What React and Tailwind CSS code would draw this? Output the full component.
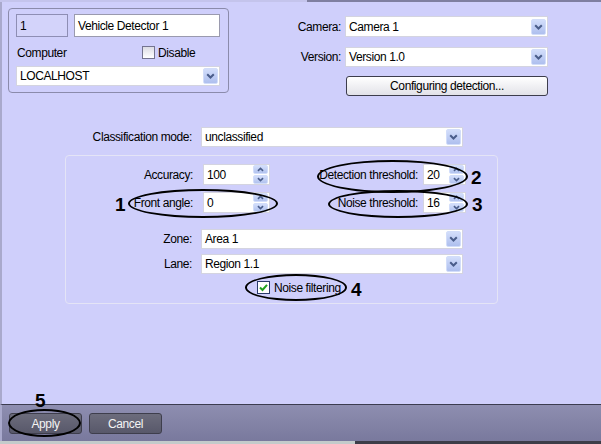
import React from "react";

const Chevron = ({ dir = "down", w = 9, h = 6 }) => (
  <svg width={w} height={h} viewBox="0 0 9 6">
    {dir === "down" ? (
      <path d="M1.2 1.2 L4.5 4.5 L7.8 1.2" fill="none" stroke="#4a5d8a" strokeWidth="2" />
    ) : (
      <path d="M1.2 4.8 L4.5 1.5 L7.8 4.8" fill="none" stroke="#4a5d8a" strokeWidth="2" />
    )}
  </svg>
);

const DropBtn = () => (
  <div className="flex h-[16px] w-[15px] items-center justify-center rounded-[2px] border border-[#d2ddfa] bg-gradient-to-b from-[#d3defb] to-[#aebfee]">
    <Chevron />
  </div>
);

const SpinBtns = () => (
  <div className="flex flex-col gap-[1px]">
    <div className="flex h-[9px] w-[15px] items-center justify-center rounded-[2px] border border-[#d2ddfa] bg-gradient-to-b from-[#d3defb] to-[#b2c3ef]">
      <Chevron dir="up" w={7} h={5} />
    </div>
    <div className="flex h-[9px] w-[15px] items-center justify-center rounded-[2px] border border-[#d2ddfa] bg-gradient-to-b from-[#d3defb] to-[#b2c3ef]">
      <Chevron dir="down" w={7} h={5} />
    </div>
  </div>
);

export default function App() {
  return (
    <div className="relative flex h-[444px] w-[601px] flex-col overflow-hidden bg-[#cfcffb] font-['Liberation_Sans',Arial,sans-serif] text-[12px] leading-none tracking-[-0.4px] text-black">
      {/* top edge */}
      <div className="flex h-[2px]">
        <div className="w-[307px] bg-[#c4c4ec]" />
        <div className="flex-1 bg-[#7f7fa0]" />
      </div>

      {/* main area */}
      <div className="flex h-[402px] flex-col border-l-2 border-[#a9a9cc]">
        {/* top row */}
        <div className="flex pt-[6px]">
          {/* left group box */}
          <div className="ml-[6px] flex h-[85px] w-[221px] flex-col rounded-[4px] border border-[#8b8bab] px-[7px] pt-[5px]">
            <div className="flex gap-[6px]">
              <div className="flex h-[23px] w-[52px] items-center border border-[#8e8eb4] bg-[#d3d3fa] pl-[3px] text-[12px]">
                1
              </div>
              <div className="flex h-[23px] w-[146px] items-center border border-[#9a9aae] bg-white pl-[3px]">
                Vehicle Detector 1
              </div>
            </div>
            <div className="mt-[9px] flex h-[13px] items-center">
              <div className="w-[126px] pl-[1px]">Computer</div>
              <div className="h-[13px] w-[13px] border border-[#74748f] bg-gradient-to-b from-[#dcdce4] to-white" />
              <div className="ml-[3px]">Disable</div>
            </div>
            <div className="mt-[7px] flex h-[20px] w-[204px] items-center justify-between border border-[#d4d4e0] bg-white pl-[3px] pr-[1px]">
              <span>LOCALHOST</span>
              <DropBtn />
            </div>
          </div>

          {/* right column */}
          <div className="ml-[51px] mt-[8px] flex flex-col">
            <div className="flex h-[21px] items-center">
              <div className="w-[61px] text-right">Camera:</div>
              <div className="ml-[4px] flex h-[21px] w-[203px] items-center justify-between border border-[#d4d4e0] bg-white pl-[3px] pr-[1px]">
                <span>Camera 1</span>
                <DropBtn />
              </div>
            </div>
            <div className="mt-[10px] flex h-[20px] items-center">
              <div className="w-[61px] text-right">Version:</div>
              <div className="ml-[4px] flex h-[20px] w-[203px] items-center justify-between border border-[#d4d4e0] bg-white pl-[3px] pr-[1px]">
                <span>Version 1.0</span>
                <DropBtn />
              </div>
            </div>
            <div className="mt-[9px] flex pl-[66px]">
              <div className="flex h-[20px] w-[202px] items-center justify-center rounded-[3px] border border-[#3d3d4c] bg-gradient-to-b from-white to-[#e2e2e8]">
                Configuring detection...
              </div>
            </div>
          </div>
        </div>

        {/* classification row */}
        <div className="mt-[31px] flex items-center pl-[64px]">
          <div className="w-[126px] text-right">Classification mode:</div>
          <div className="ml-[9px] flex h-[20px] w-[262px] items-center justify-between border border-[#d4d4e0] bg-white pl-[3px] pr-[1px]">
            <span>unclassified</span>
            <DropBtn />
          </div>
        </div>

        {/* inner group */}
        <div className="ml-[63px] mt-[8px] flex h-[149px] w-[433px] flex-col rounded-[4px] border border-[#e4e4f6] pt-[8px]">
          <div className="flex h-[21px] items-center">
            <div className="w-[127px] text-right">Accuracy:</div>
            <div className="ml-[10px] flex h-[21px] w-[67px] items-center justify-between border border-[#d4d4e0] bg-white pl-[3px] pr-[1px]">
              <span>100</span>
              <SpinBtns />
            </div>
            <div className="w-[148px] text-right">Detection threshold:</div>
            <div className="ml-[5px] flex h-[21px] w-[43px] items-center justify-between border border-[#d4d4e0] bg-white pl-[3px] pr-[1px]">
              <span>20</span>
              <SpinBtns />
            </div>
          </div>
          <div className="mt-[7px] flex h-[21px] items-center">
            <div className="w-[127px] text-right">Front angle:</div>
            <div className="ml-[10px] flex h-[21px] w-[67px] items-center justify-between border border-[#d4d4e0] bg-white pl-[3px] pr-[1px]">
              <span>0</span>
              <SpinBtns />
            </div>
            <div className="w-[148px] text-right">Noise threshold:</div>
            <div className="ml-[5px] flex h-[21px] w-[43px] items-center justify-between border border-[#d4d4e0] bg-white pl-[3px] pr-[1px]">
              <span>16</span>
              <SpinBtns />
            </div>
          </div>
          <div className="mt-[16px] flex h-[20px] items-center">
            <div className="w-[126px] text-right">Zone:</div>
            <div className="ml-[9px] flex h-[20px] w-[262px] items-center justify-between border border-[#d4d4e0] bg-white pl-[3px] pr-[1px]">
              <span>Area 1</span>
              <DropBtn />
            </div>
          </div>
          <div className="mt-[5px] flex h-[20px] items-center">
            <div className="w-[126px] text-right">Lane:</div>
            <div className="ml-[9px] flex h-[20px] w-[262px] items-center justify-between border border-[#d4d4e0] bg-white pl-[3px] pr-[1px]">
              <span>Region 1.1</span>
              <DropBtn />
            </div>
          </div>
          <div className="mt-[7px] flex h-[13px] items-center pl-[191px]">
            <div className="flex h-[13px] w-[13px] items-center justify-center border border-[#2a3a6a] bg-white">
              <svg width="9" height="9" viewBox="0 0 9 9">
                <path d="M1 4.5 L3.5 7 L8 1.8" fill="none" stroke="#21a121" strokeWidth="2" />
              </svg>
            </div>
            <div className="ml-[4px]">Noise filtering</div>
          </div>
        </div>
      </div>

      {/* bottom bar */}
      <div className="flex h-[37px] gap-[7px] border-l-2 border-t border-[#3c3c50] border-l-[#a9a9cc] bg-gradient-to-b from-[#8e8eb0] to-[#79799d] pl-[7px] pt-[8px]">
        <div className="flex h-[21px] w-[73px] items-center justify-center rounded-[3px] border border-[#3e3e4c] bg-gradient-to-b from-[#6c6c7c] to-[#58586a] text-[#f4f4f4]">
          Apply
        </div>
        <div className="flex h-[21px] w-[73px] items-center justify-center rounded-[3px] border border-[#3e3e4c] bg-gradient-to-b from-[#6c6c7c] to-[#58586a] text-[#f4f4f4]">
          Cancel
        </div>
      </div>
      <div className="flex h-[3px]">
        <div className="w-[355px] bg-[#c3cbcb]" />
        <div className="flex-1 bg-[#3d3d48]" />
      </div>

      {/* annotations */}
      <div className="absolute left-[317px] top-[160px] h-[33px] w-[151px] rounded-[50%] border-2 border-black" />
      <div className="absolute left-[128px] top-[189px] h-[29px] w-[150px] rounded-[50%] border-2 border-black" />
      <div className="absolute left-[328px] top-[190px] h-[28px] w-[140px] rounded-[50%] border-2 border-black" />
      <div className="absolute left-[245px] top-[274px] h-[27px] w-[102px] rounded-[50%] border-2 border-black" />
      <div className="absolute left-[8px] top-[409px] h-[28px] w-[73px] rounded-[50%] border-2 border-black" />

      <div className="absolute left-[471px] top-[168px] text-[19px] font-bold leading-none tracking-normal">2</div>
      <div className="absolute left-[115px] top-[195px] text-[19px] font-bold leading-none tracking-normal">1</div>
      <div className="absolute left-[472px] top-[195px] text-[19px] font-bold leading-none tracking-normal">3</div>
      <div className="absolute left-[351px] top-[280px] text-[19px] font-bold leading-none tracking-normal">4</div>
      <div className="absolute left-[35px] top-[391px] text-[19px] font-bold leading-none tracking-normal">5</div>
    </div>
  );
}
